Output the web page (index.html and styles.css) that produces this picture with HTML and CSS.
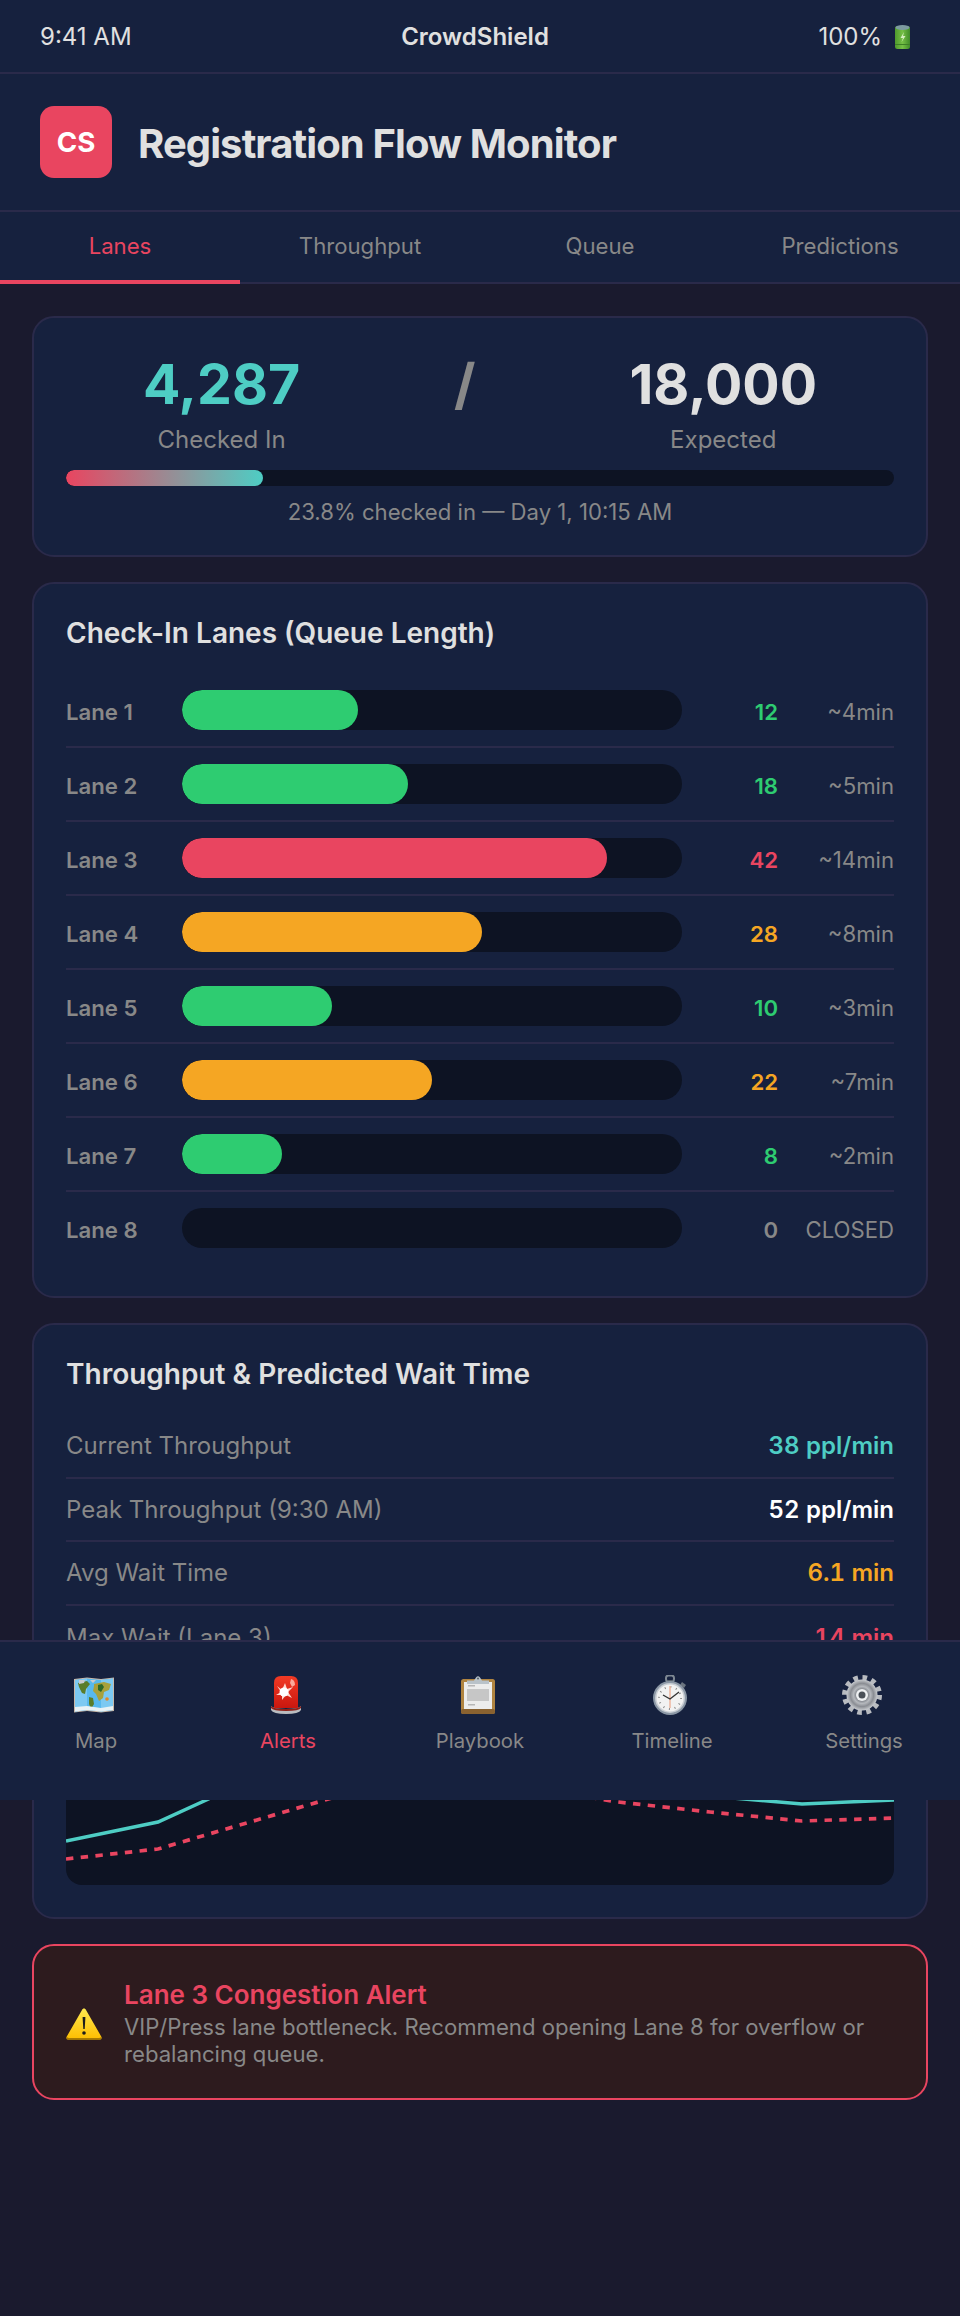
FILE: index.html
```html
<!DOCTYPE html>
<html lang="en">
<head>
    <meta charset="UTF-8">
    <meta name="viewport" content="width=device-width, initial-scale=1.0">
    <title>CrowdShield - Registration Flow Monitor</title>
    <link rel="stylesheet" href="styles.css">
</head>
<body>
    <div class="statusbar">
        <span>9:41 AM</span>
        <span class="statusbar-title">CrowdShield</span>
        <span class="battery">100%
            <svg width="17" height="24" viewBox="0 0 17 24">
                <defs>
                    <linearGradient id="can" x1="0" y1="0" x2="1" y2="0">
                        <stop offset="0" stop-color="#4f9a2c"/>
                        <stop offset="0.5" stop-color="#74bf45"/>
                        <stop offset="1" stop-color="#3f8a28"/>
                    </linearGradient>
                </defs>
                <rect x="1" y="1" width="15" height="23" rx="2.500" fill="url(#can)"/>
                <ellipse cx="8.500" cy="2.500" rx="7" ry="2.500" fill="#7c9aa0"/>
                <path d="M10 7 6.500 13H9l-1.500 4L11.500 11H9z" fill="#d5edc0"/>
                <rect x="1" y="19" width="15" height="1" fill="#3d8026"/>
            </svg>
        </span>
    </div>

    <div class="header">
        <div class="logo">CS</div>
        <h1>Registration Flow Monitor</h1>
    </div>

    <div class="tabs">
        <div class="tab active">Lanes</div>
        <div class="tab">Throughput</div>
        <div class="tab">Queue</div>
        <div class="tab">Predictions</div>
    </div>

    <div class="content">
        <div class="card summary">
            <div class="counts">
                <div class="count">
                    <div class="count-num teal">4,287</div>
                    <div class="count-label">Checked In</div>
                </div>
                <div class="slash">/</div>
                <div class="count">
                    <div class="count-num">18,000</div>
                    <div class="count-label">Expected</div>
                </div>
            </div>
            <div class="progress"><div class="progress-fill"></div></div>
            <div class="progress-text">23.8% checked in — Day 1, 10:15 AM</div>
        </div>

        <div class="card">
            <h2>Check-In Lanes (Queue Length)</h2>
            <div class="lane">
                <div class="lane-name">Lane 1</div>
                <div class="lane-track"><div class="lane-fill bg-green" style="width: 35.2%"></div></div>
                <div class="lane-count green">12</div>
                <div class="lane-wait">~4min</div>
            </div>
            <div class="lane">
                <div class="lane-name">Lane 2</div>
                <div class="lane-track"><div class="lane-fill bg-green" style="width: 45.2%"></div></div>
                <div class="lane-count green">18</div>
                <div class="lane-wait">~5min</div>
            </div>
            <div class="lane">
                <div class="lane-name">Lane 3</div>
                <div class="lane-track"><div class="lane-fill bg-red" style="width: 85%"></div></div>
                <div class="lane-count red">42</div>
                <div class="lane-wait">~14min</div>
            </div>
            <div class="lane">
                <div class="lane-name">Lane 4</div>
                <div class="lane-track"><div class="lane-fill bg-orange" style="width: 60%"></div></div>
                <div class="lane-count orange">28</div>
                <div class="lane-wait">~8min</div>
            </div>
            <div class="lane">
                <div class="lane-name">Lane 5</div>
                <div class="lane-track"><div class="lane-fill bg-green" style="width: 30%"></div></div>
                <div class="lane-count green">10</div>
                <div class="lane-wait">~3min</div>
            </div>
            <div class="lane">
                <div class="lane-name">Lane 6</div>
                <div class="lane-track"><div class="lane-fill bg-orange" style="width: 50%"></div></div>
                <div class="lane-count orange">22</div>
                <div class="lane-wait">~7min</div>
            </div>
            <div class="lane">
                <div class="lane-name">Lane 7</div>
                <div class="lane-track"><div class="lane-fill bg-green" style="width: 20%"></div></div>
                <div class="lane-count green">8</div>
                <div class="lane-wait">~2min</div>
            </div>
            <div class="lane">
                <div class="lane-name">Lane 8</div>
                <div class="lane-track"></div>
                <div class="lane-count">0</div>
                <div class="lane-wait">CLOSED</div>
            </div>
        </div>

        <div class="card">
            <h2>Throughput &amp; Predicted Wait Time</h2>
            <div class="metric">
                <span>Current Throughput</span>
                <span class="metric-val teal">38 ppl/min</span>
            </div>
            <div class="metric">
                <span>Peak Throughput (9:30 AM)</span>
                <span class="metric-val">52 ppl/min</span>
            </div>
            <div class="metric">
                <span>Avg Wait Time</span>
                <span class="metric-val orange">6.1 min</span>
            </div>
            <div class="metric">
                <span>Max Wait (Lane 3)</span>
                <span class="metric-val red">14 min</span>
            </div>
            <div class="chart">
                <svg width="828" height="200" viewBox="0 0 828 200">
                    <polyline points="0,156 92,137 184,95 276,60 368,45 460,50 552,80 644,111 736,119 828,115" fill="none" stroke="#4ecdc4" stroke-width="3.500"/>
                    <polyline points="0,174 92,164 184,137 276,110 368,100 460,102 552,117 644,127 736,136 828,133" fill="none" stroke="#e94560" stroke-width="3.700" stroke-dasharray="7.400 7.400"/>
                </svg>
            </div>
        </div>

        <div class="alert">
            <svg class="alert-icon" width="36" height="32" viewBox="0 0 36 32">
                <defs>
                    <linearGradient id="warn" x1="0" y1="0" x2="0" y2="1">
                        <stop offset="0" stop-color="#ffe84f"/>
                        <stop offset="1" stop-color="#fdbd00"/>
                    </linearGradient>
                </defs>
                <path d="M18 0.500C19 0.500 19.500 1 20 2L35.500 29Q36 31.500 34 31.500H2Q0 31.500 0.500 29L16 2C16.500 1 17 0.500 18 0.500z" fill="url(#warn)"/>
                <path d="M0.800 29Q0.500 31.500 2 31.500H34Q35.500 31.500 35.200 29Q34 30 33 30H3Q2 30 0.800 29z" fill="#a87a00"/>
                <path d="M16.600 9h2.800l-.7 12h-1.400z" fill="#1c1c1c"/>
                <circle cx="18" cy="25" r="1.800" fill="#1c1c1c"/>
            </svg>
            <div>
                <div class="alert-title">Lane 3 Congestion Alert</div>
                <div class="alert-text">VIP/Press lane bottleneck. Recommend opening Lane 8 for overflow or rebalancing queue.</div>
            </div>
        </div>
    </div>

    <div class="bottomnav">
        <div class="nav-item">
            <svg width="40" height="40" viewBox="0 0 40 40">
                <path d="M0 4 13 2.500 27 4 40 2.500V36L27 37.500 13 36 0 37.500z" fill="#c9b8a8"/>
                <path d="M1 5 13 3.500 27 5 39 3.500V35L27 36.500 13 35 1 36.500z" fill="#58b9ee"/>
                <path d="M1 5 13 3.500V35L1 36.500z" fill="#7cc9f2"/>
                <path d="M27 5 39 3.500V35L27 36.500z" fill="#7cc9f2"/>
                <path d="M4 8l9-2 3 3-4 5-1 5-3-1-3-6zM15 22l4 1 1 6-3 5-2-5z" fill="#5a7d2a"/>
                <path d="M20 9l10-2 7 2-2 6-5 2-1 6-4 3-3-7-3-3 1-5z" fill="#a8a13c"/>
                <path d="M24 10l4-1 2 3-3 5-3-2z" fill="#2f6a2a"/>
                <path d="M5 5l6 0-1 3-5 1zM16 5h6l-3 3z" fill="#c8ccd0"/>
                <circle cx="33" cy="24" r="1.800" fill="#e08a2a"/>
                <path d="M1 32 13 31 27 33 39 31V35L27 36.500 13 35 1 36.500z" fill="#e8f2f6"/>
            </svg>
            <span>Map</span>
        </div>
        <div class="nav-item active">
            <svg width="40" height="40" viewBox="0 0 40 40">
                <defs>
                    <linearGradient id="siren" x1="0" y1="0" x2="0" y2="1">
                        <stop offset="0" stop-color="#f23a24"/>
                        <stop offset="1" stop-color="#c9170f"/>
                    </linearGradient>
                </defs>
                <path d="M8 33V8Q8 1 15 1H25Q32 1 32 8V33z" fill="url(#siren)"/>
                <path d="M16 15 19 8 21 14 27 12 22 17 26 23 20 20 16 25 16 20 10 20 15 17 11 11z" fill="#ffd9d0"/>
                <circle cx="18" cy="17" r="4.500" fill="#fff"/>
                <path d="M25 4q4 1 4 6l-3 2-2-4z" fill="#f9a89a"/>
                <path d="M5 31Q7 34 20 34T35 31V35Q33 39 20 39T5 35z" fill="#b9bcc0"/>
                <path d="M5 31Q7 34 20 34T35 31V33Q33 36 20 36T5 33z" fill="#8f2018"/>
            </svg>
            <span>Alerts</span>
        </div>
        <div class="nav-item">
            <svg width="40" height="40" viewBox="0 0 40 40">
                <rect x="3" y="4" width="34" height="35" rx="2.500" fill="#b08440"/>
                <rect x="3" y="34" width="34" height="5" rx="2" fill="#8a6230"/>
                <rect x="6" y="7" width="28" height="27" fill="#ececec"/>
                <path d="M9 14h22v12H9z" fill="#c6c6c6"/>
                <path d="M10 10h7v1.500h-7zM10 29h7v1.500h-7z" fill="#b6b6b6"/>
                <path d="M9 9V5.500H16L18 2.500Q20 0 22 2.500L24 5.500H31V9z" fill="#b9c2c9"/>
                <circle cx="20" cy="3.500" r="1.100" fill="#5a6670"/>
            </svg>
            <span>Playbook</span>
        </div>
        <div class="nav-item">
            <svg width="40" height="40" viewBox="0 0 40 40">
                <rect x="16" y="0.500" width="8" height="6" rx="2.500" fill="none" stroke="#7d8792" stroke-width="2"/>
                <rect x="17.500" y="5" width="5" height="3" fill="#59636e"/>
                <path d="M32 7l4 3-2 3-4-3z" fill="#6b7580"/>
                <circle cx="20" cy="23" r="17" fill="#8b97a5"/>
                <circle cx="20" cy="23" r="15" fill="#c9ced4"/>
                <circle cx="20" cy="23" r="13.500" fill="#f2f2f2"/>
                <circle cx="20" cy="23" r="11" fill="none" stroke="#8a8a8a" stroke-width="2" stroke-dasharray="1 4.760"/>
                <path d="M20 11V33" stroke="#eeb9a4" stroke-width="1.600"/>
                <path d="M13 20 20 24 29 17" fill="none" stroke="#333" stroke-width="1.300"/>
            </svg>
            <span>Timeline</span>
        </div>
        <div class="nav-item">
            <svg width="40" height="40" viewBox="0 0 40 40">
                <defs>
                    <radialGradient id="gear">
                        <stop offset="0" stop-color="#ffffff"/>
                        <stop offset="0.350" stop-color="#7d8188"/>
                        <stop offset="0.550" stop-color="#b5b8bd"/>
                        <stop offset="0.750" stop-color="#8a8d93"/>
                        <stop offset="1" stop-color="#c9ccd0"/>
                    </radialGradient>
                </defs>
                <circle cx="20" cy="20" r="17.500" fill="none" stroke="#b8bbc0" stroke-width="5" stroke-dasharray="4.600 4.560"/>
                <circle cx="20" cy="20" r="15.500" fill="url(#gear)"/>
                <circle cx="20" cy="20" r="6" fill="#eef0f2"/>
                <circle cx="20" cy="20" r="3.500" fill="#4a5058"/>
            </svg>
            <span>Settings</span>
        </div>
    </div>
</body>
</html>
```

FILE: styles.css
```css
* {
    box-sizing: border-box;
    margin: 0;
    padding: 0;
}
body {
    position: relative;
    height: 2316px;
    overflow: hidden;
    font-family: Inter, "Liberation Sans", sans-serif;
    background-color: #1a1a2e;
    color: #e0e0e0;
}
.teal { color: #4ecdc4; }
.green { color: #2ecc71; }
.red { color: #e94560; }
.orange { color: #f5a623; }
.bg-green { background-color: #2ecc71; }
.bg-red { background-color: #e94560; }
.bg-orange { background-color: #f5a623; }

.statusbar {
    display: flex;
    justify-content: space-between;
    align-items: center;
    height: 74px;
    padding: 1px 40px 0;
    font-size: 24px;
    background-color: #16213e;
    border-bottom: 2px solid #2a2a4a;
}
.statusbar-title {
    font-weight: 600;
}
.battery {
    display: flex;
    align-items: center;
    gap: 12px;
}
.battery svg {
    margin-right: 9px;
}
.header {
    display: flex;
    align-items: center;
    gap: 26px;
    height: 138px;
    padding: 0 40px;
    background-color: #16213e;
    border-bottom: 2px solid #2a2a4a;
}
.logo {
    display: flex;
    align-items: center;
    justify-content: center;
    width: 72px;
    height: 72px;
    border-radius: 14px;
    background-color: #e94560;
    color: #fff;
    font-size: 27.700px;
    font-weight: 700;
}
.header h1 {
    margin-top: 2px;
    font-size: 40px;
    font-weight: 700;
    letter-spacing: -0.900px;
}
.tabs {
    display: grid;
    grid-template-columns: repeat(4, 1fr);
    height: 72px;
    background-color: #16213e;
    border-bottom: 2px solid #2a2a4a;
}
.tab {
    display: flex;
    align-items: center;
    justify-content: center;
    height: 72px;
    font-size: 22.150px;
    color: #888;
    border-bottom: 4px solid transparent;
}
.tab.active {
    color: #e94560;
    border-bottom-color: #e94560;
}

.content {
    padding: 32px 32px 0;
}
.card {
    margin-bottom: 25px;
    padding: 32px;
    background-color: #16213e;
    border: 2px solid #2a2a4a;
    border-radius: 22px;
}
.card h2 {
    font-size: 28px;
    font-weight: 600;
    line-height: 34px;
    margin-bottom: 24px;
}
.summary {
    padding-bottom: 30px;
}
.counts {
    display: flex;
    justify-content: space-around;
    text-align: center;
}
.count-num {
    font-size: 55.400px;
    font-weight: 700;
    line-height: 68px;
}
.count-label {
    margin-top: 7px;
    font-size: 24px;
    color: #888;
}
.slash {
    font-size: 55.400px;
    font-weight: 700;
    line-height: 68px;
    color: #888;
}
.progress {
    height: 16px;
    margin-top: 16px;
    background-color: #0d1323;
    border-radius: 8px;
    overflow: hidden;
}
.progress-fill {
    width: 23.8%;
    height: 100%;
    border-radius: 8px;
    background: linear-gradient(90deg, #e94560, #4ecdc4);
}
.progress-text {
    margin-top: 13px;
    text-align: center;
    font-size: 22.150px;
    color: #888;
}

.lane {
    display: flex;
    align-items: center;
    padding: 16px 0;
    border-bottom: 2px solid #2a2a4a;
}
.lane:last-child {
    border-bottom: none;
}
.lane-name {
    width: 116px;
    padding-top: 3px;
    font-size: 22.150px;
    font-weight: 600;
    color: #888;
}
.lane-track {
    width: 500px;
    height: 40px;
    background-color: #0d1323;
    border-radius: 20px;
    overflow: hidden;
}
.lane-fill {
    height: 100%;
    border-radius: 20px;
}
.lane-count {
    width: 96px;
    padding-top: 3px;
    text-align: right;
    font-size: 22.150px;
    font-weight: 600;
    color: #888;
}
.lane-count.green { color: #2ecc71; }
.lane-count.red { color: #e94560; }
.lane-count.orange { color: #f5a623; }
.lane-wait {
    width: 116px;
    padding-top: 3px;
    text-align: right;
    font-size: 22.150px;
    color: #888;
}

.metric {
    display: flex;
    justify-content: space-between;
    align-items: center;
    height: 63.600px;
    font-size: 24px;
    color: #888;
    border-bottom: 2px solid #2a2a4a;
}
.metric:nth-child(5) {
    border-bottom: none;
}
.metric-val {
    font-weight: 600;
    font-variant-numeric: tabular-nums;
    color: #fff;
}
.metric-val.teal { color: #4ecdc4; }
.metric-val.orange { color: #f5a623; }
.metric-val.red { color: #e94560; }
.chart {
    height: 200px;
    margin-top: 16px;
    background-color: #0d1323;
    border-radius: 16px;
    overflow: hidden;
}
.chart svg {
    display: block;
}

.alert {
    display: flex;
    align-items: center;
    gap: 22px;
    padding: 33px 32px 30px;
    background-color: #2d1b1e;
    border: 2px solid #e94560;
    border-radius: 22px;
}
.alert-icon {
    flex-shrink: 0;
}
.alert-title {
    font-size: 26px;
    font-weight: 600;
    color: #e94560;
}
.alert-text {
    margin-top: 4px;
    font-size: 22.150px;
    line-height: 27px;
    color: #888;
}

/* sits over the scrolled content */
.bottomnav {
    position: absolute;
    left: 0;
    right: 0;
    top: 1640px;
    height: 160px;
    display: grid;
    grid-template-columns: repeat(5, 1fr);
    padding-top: 33px;
    background-color: #16213e;
    border-top: 2px solid #2a2a4a;
}
.nav-item {
    display: flex;
    flex-direction: column;
    align-items: center;
    gap: 13px;
    font-size: 20.300px;
    color: #888;
}
.nav-item svg {
    margin-right: 4px;
}
.nav-item.active {
    color: #e94560;
}
```
